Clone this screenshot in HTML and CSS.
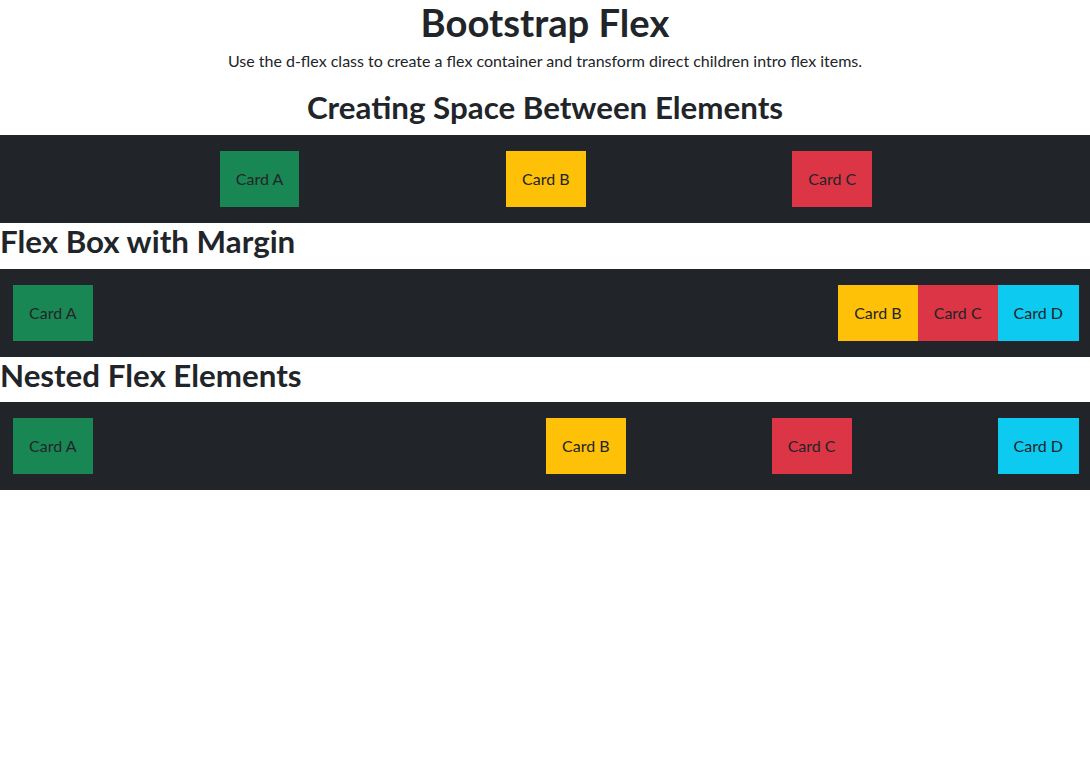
FILE: index.html
```html
<!DOCTYPE html>
<html lang="en">
<head>
<meta charset="utf-8">
<title>Bootstrap Flex</title>
<link rel="stylesheet" href="styles.css">
</head>
<body>
<header class="intro">
  <h1 class="title">Bootstrap Flex</h1>
  <p class="lead">Use the d-flex class to create a flex container and transform direct children intro flex items.</p>
  <h2 class="heading heading-center">Creating Space Between Elements</h2>
</header>

<section class="bar bar-evenly">
  <div class="card card-green">Card A</div>
  <div class="card card-yellow">Card B</div>
  <div class="card card-red">Card C</div>
</section>

<h2 class="heading">Flex Box with Margin</h2>
<section class="bar">
  <div class="card card-green push-right">Card A</div>
  <div class="card card-yellow">Card B</div>
  <div class="card card-red">Card C</div>
  <div class="card card-cyan">Card D</div>
</section>

<h2 class="heading">Nested Flex Elements</h2>
<section class="bar">
  <div class="half">
    <div class="card card-green">Card A</div>
  </div>
  <div class="half half-between">
    <div class="card card-yellow">Card B</div>
    <div class="card card-red">Card C</div>
    <div class="card card-cyan">Card D</div>
  </div>
</section>
</body>
</html>
```
FILE: styles.css
```css
* { box-sizing: border-box; }

body {
  margin: 0;
  font-family: Lato, "Noto Sans", sans-serif;
  font-size: 16px;
  line-height: 24px;
  color: #212529;
  background: #fff;
}

.intro { text-align: center; }

.title {
  margin: 0 0 5.4px;
  font-size: 38.2px;
  font-weight: 700;
  line-height: 44px;
}

.lead {
  margin: 0 0 16px;
  font-size: 16px;
  line-height: 24px;
}

.heading {
  margin: 0 0 8px;
  font-size: 31.3px;
  font-weight: 700;
  line-height: 37.6px;
}

.heading-center { text-align: center; }

.bar {
  display: flex;
  background: #212529;
  padding: 16px 11px 16px 13px;
}

.bar-evenly { justify-content: space-evenly; }

.card {
  padding: 16px;
  line-height: 24px;
  color: #212529;
  white-space: nowrap;
}

.card-green { background: #198754; }
.card-yellow { background: #ffc107; }
.card-red { background: #dc3545; }
.card-cyan { background: #0dcaf0; }

.push-right { margin-right: auto; }

.half {
  flex: 1 1 0;
  display: flex;
}

.half-between { justify-content: space-between; }
```
